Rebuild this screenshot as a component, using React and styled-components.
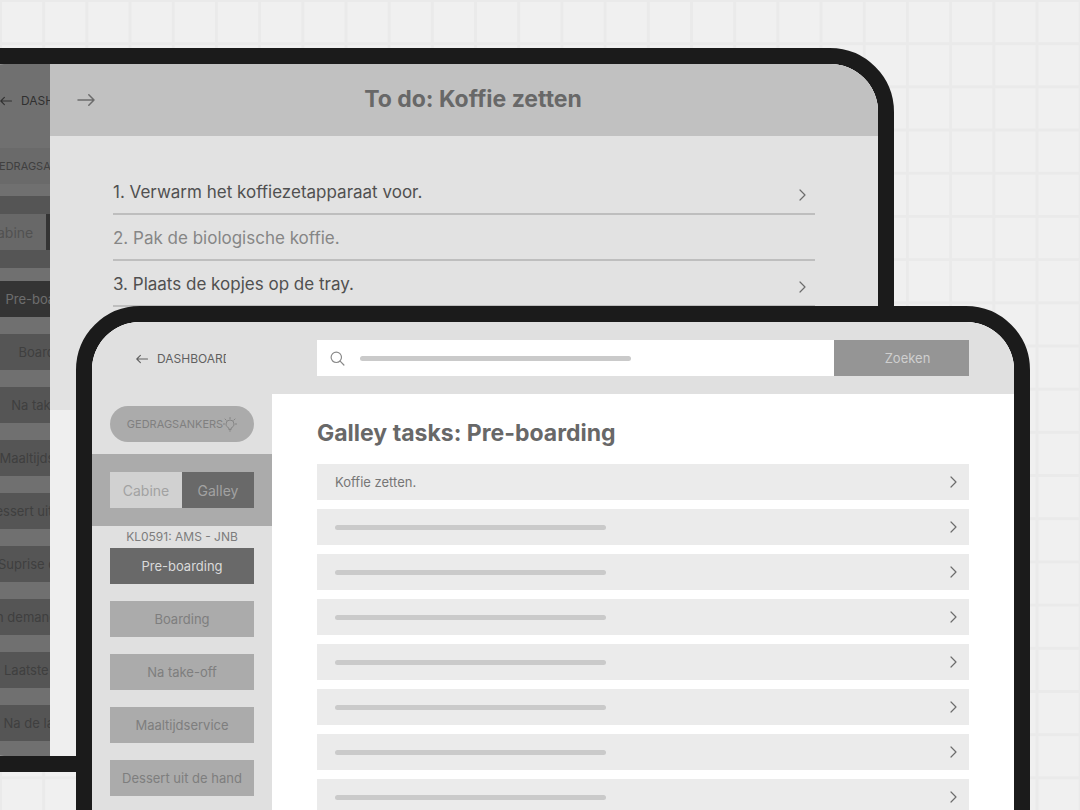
import React from "react";
import styled, { createGlobalStyle } from "styled-components";

const GlobalStyle = createGlobalStyle`
  *, *::before, *::after { box-sizing: border-box; }
  body {
    margin: 0;
    background: #f0f0f0;
    font-family: Inter, "Liberation Sans", sans-serif;
  }
  button, input { font-family: inherit; border: 0; padding: 0; margin: 0; }
  h1, h2, p, ul, ol { margin: 0; padding: 0; }
  ul, ol { list-style: none; }
`;

const Stage = styled.div`
  display: grid;
  height: 100vh;
  overflow: hidden;
  background-color: #f0f0f0;
  background-image:
    linear-gradient(#eaeaea 3px, transparent 3px),
    linear-gradient(90deg, #eaeaea 3px, transparent 3px);
  background-size: 4vw 4vw;
  background-position: -1px -1px;
`;

const Device = styled.section`
  position: relative;
  grid-area: 1 / 1;
  align-self: start;
  height: 724px;
  margin: ${(p) => (p.$back ? "48px 186px 0 -60px" : "306px 50px 0 76px")};
  border: 16px solid #1b1b1b;
  border-radius: 64px;
  background: #fff;
  overflow: hidden;
`;

const Screen = styled.div`
  display: flex;
  height: 100%;
  background: #fff;
`;

const SidebarPanel = styled.aside`
  flex: none;
  width: 180px;
  background: #e0e0e0;
`;

const BackLink = styled.a`
  display: flex;
  align-items: center;
  gap: 9px;
  height: 72px;
  padding-top: 2px;
  margin: 0 46px 0 44px;
  overflow: hidden;
  color: #606060;
  font-size: 12px;
  line-height: 16px;
  text-decoration: none;
  white-space: nowrap;
  svg { flex: none; }
`;

const AnchorsButton = styled.button`
  display: flex;
  align-items: center;
  justify-content: center;
  width: 144px;
  height: 36px;
  margin: 12px 18px;
  border-radius: 18px;
  background: ${(p) => (p.$muted ? "#d5d5d5" : "#ababab")};
  color: #808080;
  font-size: 11px;
  white-space: nowrap;
`;

const SwitchBand = styled.div`
  display: flex;
  padding: 18px;
  background: #ababab;
`;

const SwitchOption = styled.button`
  flex: 1;
  height: 36px;
  background: ${(p) => (p.$active ? "#696969" : "#d1d1d1")};
  color: #a2a2a2;
  font-size: 14px;
`;

const Flight = styled.p`
  color: #7c7c7c;
  font-size: 12px;
  line-height: 22px;
  text-align: center;
`;

const Phases = styled.nav`
  display: flex;
  flex-direction: column;
  gap: 17px;
  padding: ${(p) => (p.$spaced ? "13px 18px 0" : "0 18px")};
`;

const PhaseButton = styled.button`
  height: 36px;
  background: ${(p) => (p.$active ? "#696969" : "#ababab")};
  color: ${(p) => (p.$active ? "#dadada" : "#7e7e7e")};
  font-size: 13px;
  white-space: nowrap;
`;

const Main = styled.main`
  flex: 1;
  min-width: 0;
`;

const SearchBar = styled.form`
  display: flex;
  padding: 18px 45px;
  background: #e0e0e0;
`;

const SearchField = styled.label`
  flex: 1;
  display: flex;
  align-items: center;
  min-width: 0;
  height: 36px;
  padding-left: 13px;
  background: #fff;
  svg { flex: none; margin-right: 15px; }
`;

const SearchInput = styled.input`
  flex: 1;
  min-width: 0;
  height: 36px;
  background: transparent;
  outline: none;
`;

const SearchButton = styled.button`
  width: 135px;
  padding-left: 12px;
  background: #959595;
  color: #cfcfcf;
  font-size: 13px;
`;

const Skeleton = styled.span`
  display: block;
  width: 271px;
  height: 5px;
  border-radius: 3px;
  background: #cacaca;
`;

const TaskSection = styled.div`
  padding: 24px 45px 0;
`;

const Heading = styled.h1`
  color: #686868;
  font-size: 23px;
  line-height: 30px;
  font-weight: 700;
  white-space: nowrap;
`;

const Tasks = styled.ul`
  display: grid;
  gap: 9px;
  padding-top: 16px;
`;

const TaskButton = styled.button`
  display: flex;
  align-items: center;
  justify-content: space-between;
  width: 100%;
  height: 36px;
  padding: 0 12px 0 18px;
  background: #ebebeb;
  color: #767676;
  font-size: 13px;
`;

const Shade = styled.div`
  position: absolute;
  inset: 0;
  background: rgba(0, 0, 0, 0.5);
`;

const Drawer = styled.div`
  position: absolute;
  inset: 0 0 0 94px;
  background: #efefef;
`;

const DrawerHeader = styled.header`
  display: flex;
  align-items: center;
  height: 72px;
  padding: 0 27px;
  background: #c1c1c1;
`;

const CloseButton = styled.button`
  display: flex;
  background: transparent;
  color: #6c6c6c;
`;

const DrawerTitle = styled(Heading).attrs({ as: "h2" })`
  flex: 1;
  padding-bottom: 2px;
  text-align: center;
`;

const Steps = styled.ol`
  height: 274px;
  padding: 33px 63px 0;
  background: #e2e2e2;
`;

const Step = styled.li`
  display: flex;
  align-items: center;
  justify-content: space-between;
  height: 46px;
  padding: 2px 9px 0 0;
  border-bottom: 2px solid #bebebe;
  color: ${(p) => (p.$done ? "#868686" : "#505050")};
  font-size: 17px;
  svg { margin-top: 6px; }
`;

function ArrowLeftIcon() {
  return (
    <svg width="12" height="10" viewBox="0 0 12 10" fill="none" stroke="currentColor" strokeWidth="1.1" strokeLinecap="round" strokeLinejoin="round" aria-hidden="true">
      <path d="M11.5 5H.8M4.4 1.4L.8 5l3.6 3.6" />
    </svg>
  );
}

function ArrowRightIcon() {
  return (
    <svg width="18" height="12" viewBox="0 0 18 12" fill="none" stroke="currentColor" strokeWidth="1.5" strokeLinecap="round" strokeLinejoin="round" aria-hidden="true">
      <path d="M1 6h16M11.800.8L17 6l-5.200 5.200" />
    </svg>
  );
}

function Chevron() {
  return (
    <svg width="7" height="12" viewBox="0 0 7 12" fill="none" stroke="#6c6c6c" strokeWidth="1.2" strokeLinecap="round" strokeLinejoin="round" aria-hidden="true">
      <path d="M1 1l5 5-5 5" />
    </svg>
  );
}

function SearchIcon() {
  return (
    <svg width="15" height="15" viewBox="0 0 15 15" fill="none" stroke="#8a8a8a" strokeWidth="1.2" strokeLinecap="round" aria-hidden="true">
      <circle cx="6.3" cy="6.3" r="5.2" />
      <path d="M10.1 10.1l3.8 3.9" />
    </svg>
  );
}

function BulbIcon() {
  return (
    <svg width="14" height="15" viewBox="0 0 14 15" fill="none" stroke="currentColor" strokeWidth="0.9" strokeLinecap="round" strokeLinejoin="round" aria-hidden="true">
      <path d="M5.900 12.200v-1.200C4.300 10.300 3 9 3 7a4 4 0 0 1 8 0c0 2-1.300 3.300-2.900 4v1.200zM6.700 14h.6M7 .5v1.200M.4 7h1.200M12.400 7h1.200M2 2l1.200 1.200M12 2l-1.200 1.200" />
    </svg>
  );
}

const phases = [
  "Pre-boarding",
  "Boarding",
  "Na take-off",
  "Maaltijdservice",
  "Dessert uit de hand",
  "Suprise drankje",
  "On demand service",
  "Laatste ronde",
  "Na de landing",
];

const tasks = ["Koffie zetten.", ...Array(11).fill(null)];

const steps = [
  { text: "1. Verwarm het koffiezetapparaat voor." },
  { text: "2. Pak de biologische koffie.", done: true },
  { text: "3. Plaats de kopjes op de tray." },
];

function Sidebar({ flight, muted }) {
  return (
    <SidebarPanel>
      <BackLink href="#dashboard">
        <ArrowLeftIcon />
        DASHBOARD
      </BackLink>
      <AnchorsButton type="button" $muted={muted}>
        GEDRAGSANKERS
        <BulbIcon />
      </AnchorsButton>
      <SwitchBand>
        <SwitchOption type="button">Cabine</SwitchOption>
        <SwitchOption type="button" $active>Galley</SwitchOption>
      </SwitchBand>
      {flight && <Flight>{flight}</Flight>}
      <Phases $spaced={!flight}>
        {phases.map((name, i) => (
          <PhaseButton key={name} type="button" $active={i === 0}>{name}</PhaseButton>
        ))}
      </Phases>
    </SidebarPanel>
  );
}

function TaskOverview() {
  return (
    <Main>
      <SearchBar onSubmit={(e) => e.preventDefault()}>
        <SearchField>
          <SearchIcon />
          <Skeleton />
          <SearchInput type="text" aria-label="Zoeken" />
        </SearchField>
        <SearchButton type="submit">Zoeken</SearchButton>
      </SearchBar>
      <TaskSection>
        <Heading>Galley tasks: Pre-boarding</Heading>
        <Tasks>
          {tasks.map((task, i) => (
            <li key={i}>
              <TaskButton type="button" aria-label={task || "Taak"}>
                {task || <Skeleton />}
                <Chevron />
              </TaskButton>
            </li>
          ))}
        </Tasks>
      </TaskSection>
    </Main>
  );
}

function StepsDrawer() {
  return (
    <Drawer>
      <DrawerHeader>
        <CloseButton type="button" aria-label="Sluiten">
          <ArrowRightIcon />
        </CloseButton>
        <DrawerTitle>To do: Koffie zetten</DrawerTitle>
      </DrawerHeader>
      <Steps>
        {steps.map((step) => (
          <Step key={step.text} $done={step.done}>
            {step.text}
            {!step.done && <Chevron />}
          </Step>
        ))}
      </Steps>
    </Drawer>
  );
}

export default function App() {
  return (
    <>
      <GlobalStyle />
      <Stage>
        <Device $back>
          <Screen inert>
            <Sidebar muted />
          </Screen>
          <Shade />
          <StepsDrawer />
        </Device>
        <Device>
          <Screen>
            <Sidebar flight="KL0591: AMS - JNB" />
            <TaskOverview />
          </Screen>
        </Device>
      </Stage>
    </>
  );
}
